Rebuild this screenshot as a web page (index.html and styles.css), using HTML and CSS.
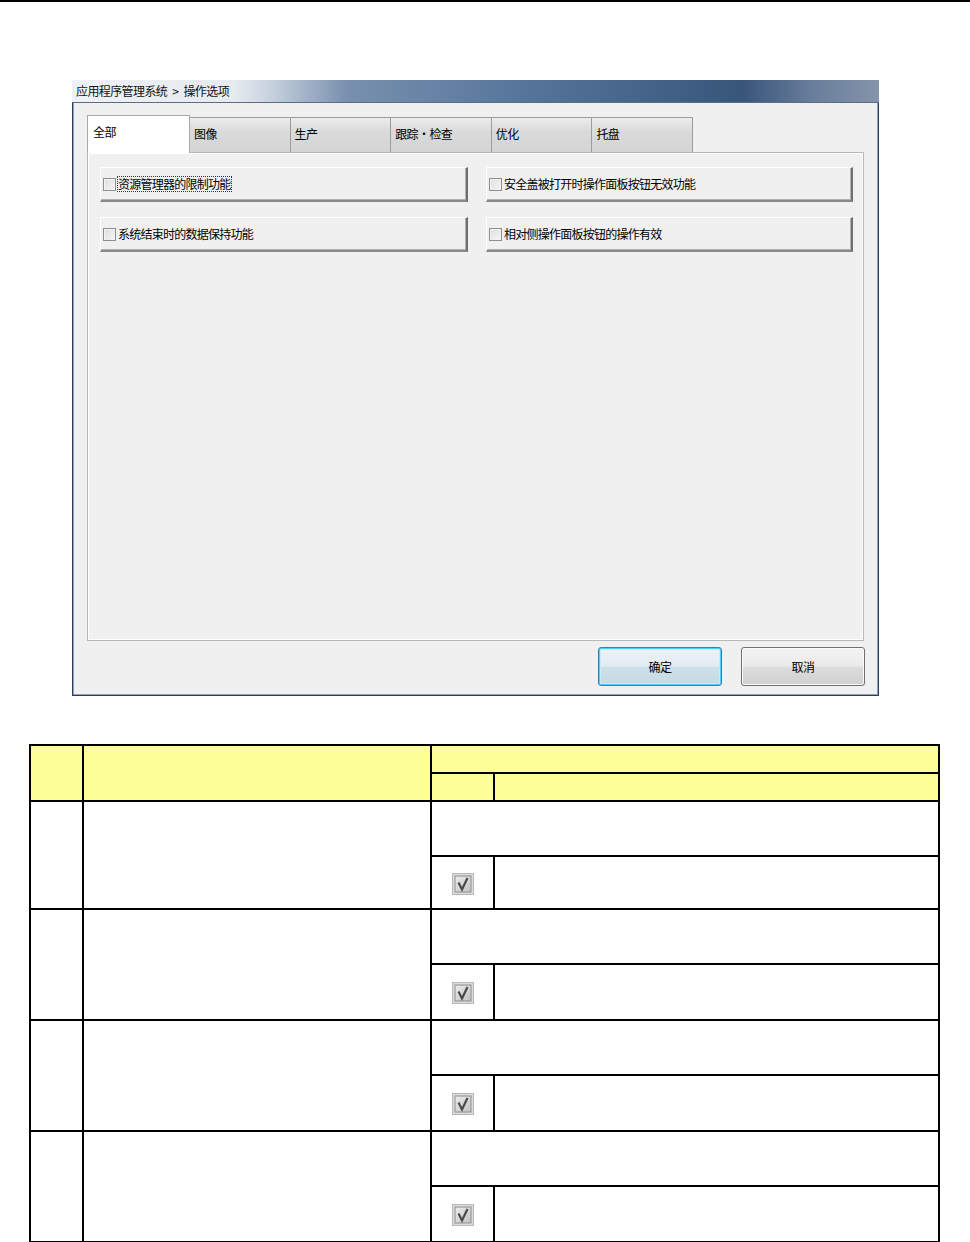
FILE: index.html
```html
<!DOCTYPE html>
<html>
<head>
<meta charset="utf-8">
<link rel="stylesheet" href="styles.css">
</head>
<body>
<div class="topline"></div>
<div class="window">
  <div class="titlebar"><span class="title">应用程序管理系统 &gt; 操作选项</span></div>
  <div class="wbody">
    <div class="tabs">
      <div class="tab active">全部</div>
      <div class="tab">图像</div>
      <div class="tab">生产</div>
      <div class="tab">跟踪・检查</div>
      <div class="tab">优化</div>
      <div class="tab">托盘</div>
    </div>
    <div class="panel">
      <div class="grid">
        <div class="opt"><span class="cb"></span><span class="lbl focus">资源管理器的限制功能</span></div>
        <div class="opt"><span class="cb"></span><span class="lbl">安全盖被打开时操作面板按钮无效功能</span></div>
        <div class="opt"><span class="cb"></span><span class="lbl">系统结束时的数据保持功能</span></div>
        <div class="opt"><span class="cb"></span><span class="lbl">相对侧操作面板按钮的操作有效</span></div>
      </div>
    </div>
    <div class="actions">
      <div class="btn primary">确定</div>
      <div class="btn">取消</div>
    </div>
  </div>
</div>

<svg width="0" height="0" style="position:absolute">
  <defs>
    <linearGradient id="g1" x1="0" y1="0" x2="1" y2="1"><stop offset="0" stop-color="#ececec"/><stop offset="1" stop-color="#c2c2c2"/></linearGradient>
    <symbol id="chk" viewBox="0 0 22 22">
      <rect x="0.5" y="0.5" width="21" height="21" fill="#dcdcdc" stroke="#b8b8b8"/>
      <rect x="3" y="3" width="16" height="16" fill="url(#g1)" stroke="#8e8e8e"/>
      <path d="M6.5 9.5 L10 16.5 L15.5 5" fill="none" stroke="#4a4a4a" stroke-width="2.2"/>
    </symbol>
  </defs>
</svg>

<table class="spec">
  <colgroup><col class="c1"><col class="c2"><col class="c3"><col></colgroup>
  <tr class="h1"><td rowspan="2"></td><td rowspan="2"></td><td colspan="2"></td></tr>
  <tr class="h2"><td></td><td></td></tr>
  <tr class="ra"><td rowspan="2"></td><td rowspan="2"></td><td colspan="2"></td></tr>
  <tr class="rb"><td class="icon"><svg width="22" height="22"><use href="#chk"/></svg></td><td></td></tr>
  <tr class="ra"><td rowspan="2"></td><td rowspan="2"></td><td colspan="2"></td></tr>
  <tr class="rb2"><td class="icon"><svg width="22" height="22"><use href="#chk"/></svg></td><td></td></tr>
  <tr class="ra"><td rowspan="2"></td><td rowspan="2"></td><td colspan="2"></td></tr>
  <tr class="rb2"><td class="icon"><svg width="22" height="22"><use href="#chk"/></svg></td><td></td></tr>
  <tr class="ra"><td rowspan="2"></td><td rowspan="2"></td><td colspan="2"></td></tr>
  <tr class="rb2"><td class="icon"><svg width="22" height="22"><use href="#chk"/></svg></td><td></td></tr>
</table>
</body>
</html>
```

FILE: styles.css
```css
* { box-sizing: border-box; }
html, body { margin: 0; padding: 0; background: #fff; }
body { font-family: "Noto Sans CJK SC", "Noto Sans", sans-serif; font-size: 12px; color: #000; }

.topline { height: 2px; background: #000; }

.window {
  margin: 78px 0 0 72px;
  width: 807px;
  height: 616px;
  border: 1px solid #2c3d57;
  border-top: none;
  background: #f0f0f0;
  display: flex;
  flex-direction: column;
  box-shadow: inset 1px 0 0 #8fa2bb, inset -1px 0 0 #8fa2bb, inset 0 -1px 0 #8fa2bb;
}
.titlebar {
  height: 23px;
  flex: none;
  background: linear-gradient(90deg, #eef1f5 0%, #e6ebf0 20%, #c4cfdc 25%, #7890ae 34%, #58769c 55%, #38557a 83%, #6a7f9c 92%, #8494aa 100%);
  border-bottom: 1px solid #5a6c86;
  display: flex;
  align-items: center;
  padding-left: 4px;
  margin: 0 -1px;
}
.title { font-size: 12px; color: #111; line-height: 1; letter-spacing: -0.6px; word-spacing: 3px; }

.wbody { flex: 1; padding: 12px 13px 0 14px; display: flex; flex-direction: column; }

.tabs { display: flex; align-items: flex-end; height: 37px; position: relative; z-index: 1; }
.tab {
  width: 101.6px;
  height: 35px;
  border: 1px solid #9c9c9c;
  border-bottom: none;
  margin-left: -1px;
  background: linear-gradient(#ececec, #dadada 40%, #d4d4d4);
  padding: 9px 0 0 4px;
  line-height: 14px;
  letter-spacing: -0.6px;
}
.tab.active {
  width: 103px;
  margin-left: 0;
  background: #fff;
  border-color: #a8a8a8;
  padding: 9px 0 0 5px;
  margin-bottom: -1px;
  height: 38px;
  z-index: 2;
}

.panel {
  width: 777px;
  height: 489px;
  border: 1px solid #b8b8b8;
  background: #f0f0f0;
  box-shadow: inset 1px 1px 0 #fff, inset -1px -1px 0 #fff;
  padding: 14px 10px 0 12px;
}
.grid { display: grid; grid-template-columns: 368px 367px; column-gap: 18px; row-gap: 15px; }
.opt {
  height: 35px;
  background: #f0f0f0;
  border-top: 1px solid #fff;
  border-left: 1px solid #fff;
  border-right: 2px solid #6e6e6e;
  border-bottom: 2px solid #8a8a8a;
  box-shadow: inset -1px -1px 0 #b0b0b0;
  display: flex;
  align-items: center;
  padding-left: 2px;
}
.cb {
  width: 13px; height: 13px;
  border: 1px solid #8e8e8e;
  background: linear-gradient(135deg, #dedede, #f6f6f6);
  box-shadow: inset 1px 1px 0 #f4f4f4;
  margin-right: 2px;
  flex: none;
}
.lbl { line-height: 14px; white-space: nowrap; letter-spacing: -0.75px; }
.lbl.focus { outline: 1px dotted #333; outline-offset: 0; }

.actions { display: flex; justify-content: flex-end; gap: 19px; padding-top: 6px; }
.btn {
  width: 124px; height: 39px;
  border: 1px solid #707070;
  border-radius: 3px;
  background: linear-gradient(#f2f2f2 0%, #ebebeb 48%, #dddddd 52%, #cfcfcf 100%);
  display: flex; align-items: center; justify-content: center;
  box-shadow: inset 0 0 0 1px #fbfbfb;
  letter-spacing: -0.5px;
}
.btn.primary {
  border-color: #3c7fb1;
  background: linear-gradient(#edf3f7 0%, #e3ecf2 48%, #cde0ea 52%, #c4dae6 100%);
  box-shadow: inset 0 0 0 1px #48d0fb, inset 0 0 0 2px #c6ecfa;
}

.spec {
  margin: 48px 0 0 29px;
  width: 911px;
  border-collapse: collapse;
  table-layout: fixed;
}
.spec td { border: 2px solid #000; padding: 0; }
.spec .c1 { width: 53px; }
.spec .c2 { width: 348px; }
.spec .c3 { width: 63px; }
.spec .h1 td, .spec .h2 td { background: #fefe99; }
.spec .h1 { height: 28px; }
.spec .h2 { height: 28px; }
.spec .ra { height: 55px; }
.spec .rb { height: 53px; }
.spec .rb2 { height: 56px; }
.spec .icon { text-align: center; vertical-align: middle; }
.spec .icon svg { display: block; margin: 2px auto 0; }
```
